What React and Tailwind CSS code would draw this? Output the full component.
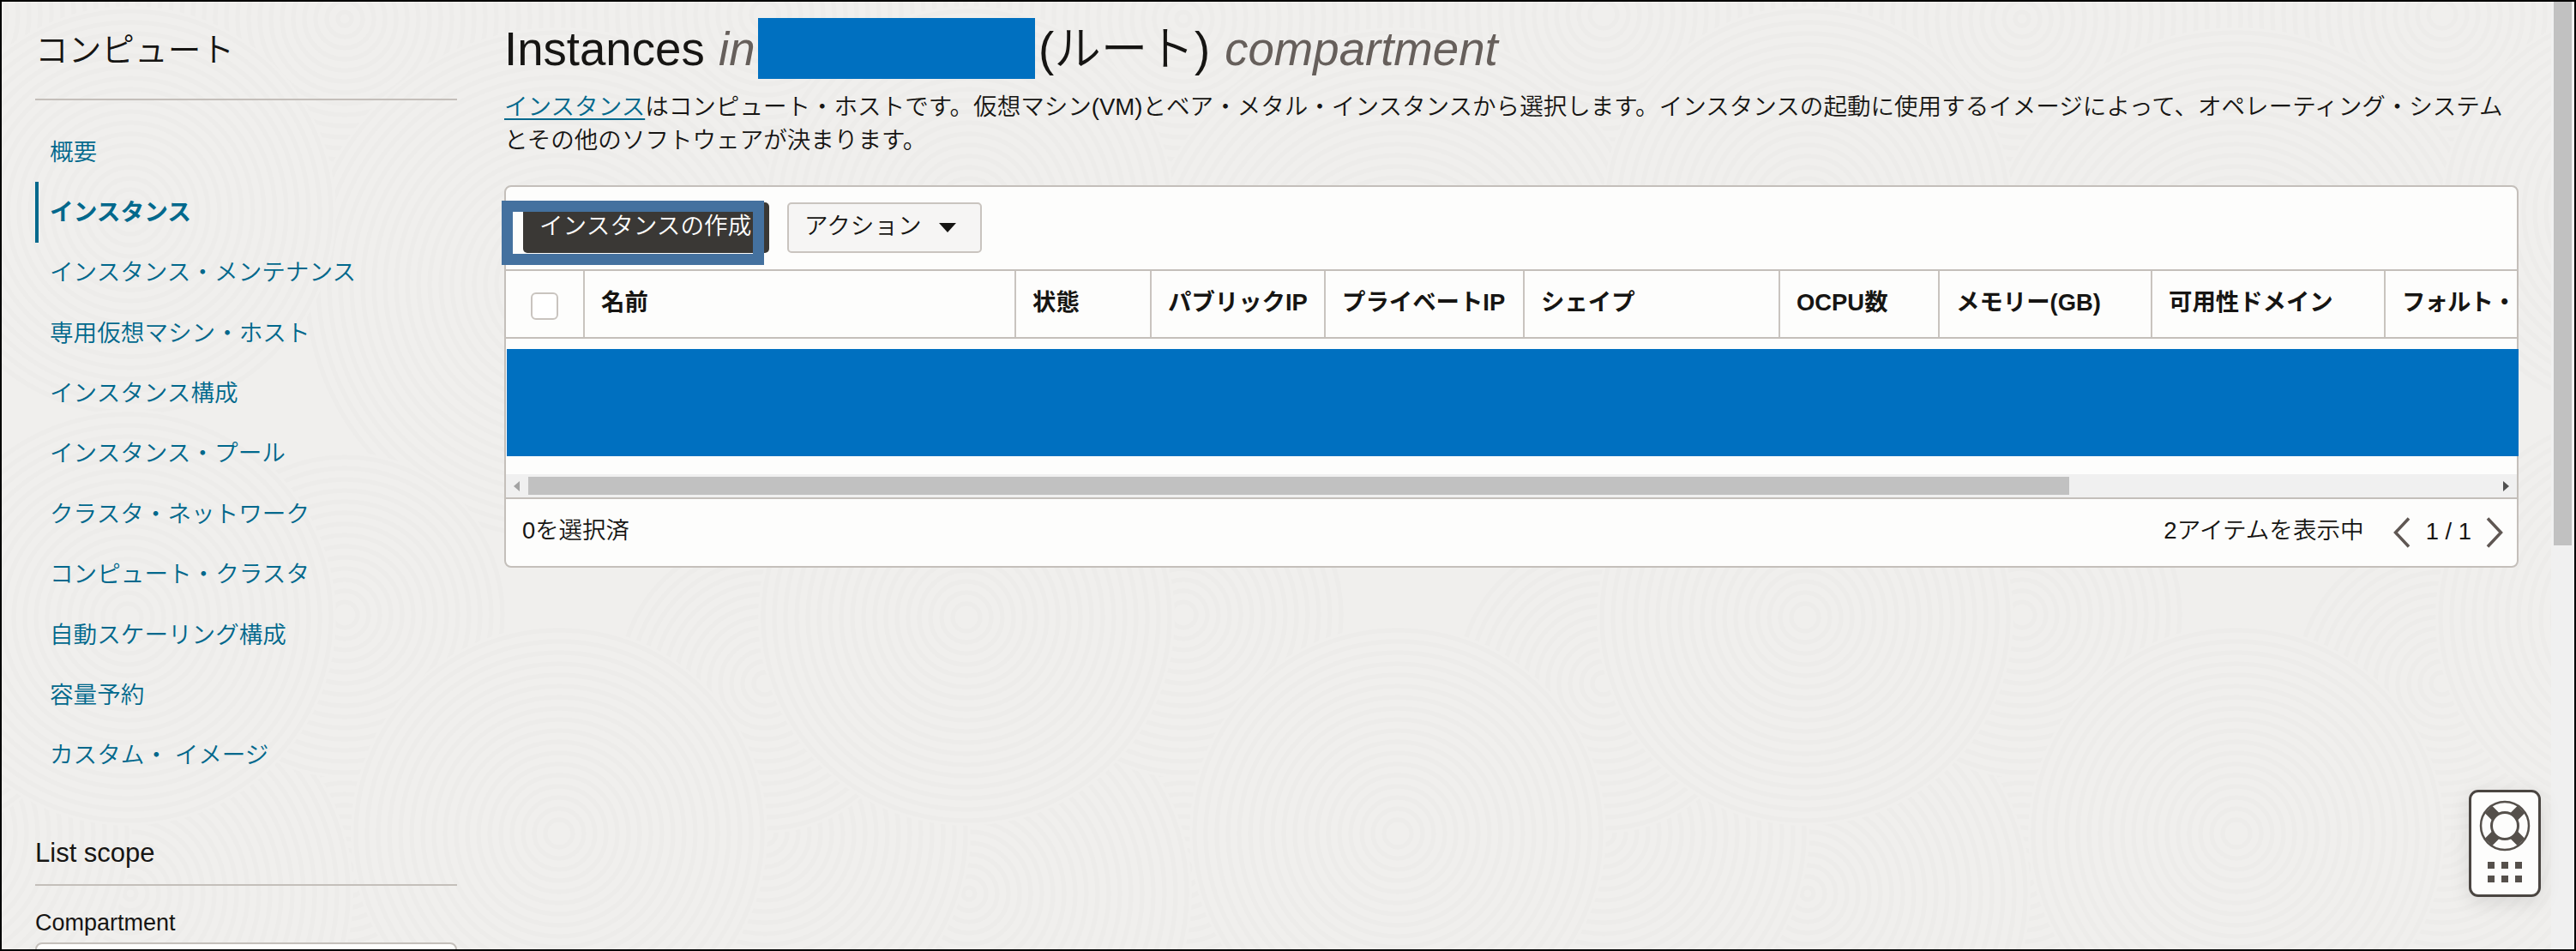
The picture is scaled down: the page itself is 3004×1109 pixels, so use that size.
import { Fragment } from 'react';

const NAV_ITEMS = [
  { label: '概要' },
  { label: 'インスタンス', active: true },
  { label: 'インスタンス・メンテナンス' },
  { label: '専用仮想マシン・ホスト' },
  { label: 'インスタンス構成' },
  { label: 'インスタンス・プール' },
  { label: 'クラスタ・ネットワーク' },
  { label: 'コンピュート・クラスタ' },
  { label: '自動スケーリング構成' },
  { label: '容量予約' },
  { label: 'カスタム・ イメージ' },
];

const COLUMNS = [
  { label: '名前', width: 'w-[503px]' },
  { label: '状態', width: 'w-[158px]' },
  { label: 'パブリックIP', width: 'w-[203px]' },
  { label: 'プライベートIP', width: 'w-[232px]' },
  { label: 'シェイプ', width: 'w-[298px]' },
  { label: 'OCPU数', width: 'w-[186px]' },
  { label: 'メモリー(GB)', width: 'w-[248px]' },
  { label: '可用性ドメイン', width: 'w-[272px]' },
  { label: 'フォルト・', width: 'w-[155px] tracking-[-0.9px]' },
];

// Overlapping ring groups of the background texture, later ones on top
const SWIRLS = [
  { x: 400, y: 20, r: 300 },
  { x: 890, y: 15, r: 230 },
  { x: 650, y: 330, r: 300 },
  { x: 150, y: 245, r: 240 },
  { x: 400, y: 1010, r: 300 },
  { x: 150, y: 1040, r: 260 },
  { x: 890, y: 970, r: 240 },
  { x: 890, y: 795, r: 175 },
  { x: 400, y: 715, r: 190 },
  { x: 147, y: 718, r: 243 },
  { x: 650, y: 970, r: 243 },
];

function Rings({ x, y, r }) {
  const radii = [];
  for (let i = r - 6; i > 4; i -= 13) radii.push(i);
  return (
    <g>
      <circle cx={x} cy={y} r={r} fill="#f0efed" />
      {radii.map((radius) => (
        <circle key={radius} cx={x} cy={y} r={radius} fill="none" stroke="#edecea" strokeWidth="5" />
      ))}
    </g>
  );
}

function Backdrop() {
  return (
    <svg className="absolute inset-0 h-full w-full" aria-hidden="true">
      <defs>
        <pattern id="swirls" width="978" height="1109" patternUnits="userSpaceOnUse">
          <rect width="978" height="1109" fill="#f0efed" />
          {SWIRLS.map((s, i) => (
            <Fragment key={i}>
              <Rings x={s.x - 978} y={s.y} r={s.r} />
              <Rings x={s.x} y={s.y} r={s.r} />
              <Rings x={s.x + 978} y={s.y} r={s.r} />
            </Fragment>
          ))}
        </pattern>
      </defs>
      <rect width="100%" height="100%" fill="url(#swirls)" />
    </svg>
  );
}

function Sidebar() {
  return (
    <aside className="w-[492px] shrink-0">
      <h2 className="flex h-[115px] items-center border-b-2 border-[#c4bfba] pt-px text-[38.7px] font-[350] leading-none whitespace-nowrap">
        コンピュート
      </h2>
      <nav className="mt-[25px] flex flex-col">
        {NAV_ITEMS.map((item) => (
          <a
            key={item.label}
            className={
              item.active
                ? 'flex h-[70.4px] items-center border-l-4 border-[#00688c] pl-[13px] text-[27.7px] font-bold whitespace-nowrap text-[#00688c]'
                : 'flex h-[70.4px] items-center pl-[17px] text-[27.6px] font-[350] whitespace-nowrap text-[#00688c]'
            }
          >
            {item.label}
          </a>
        ))}
      </nav>
      <h3 className="mt-[36px] flex h-[81px] items-center border-b-2 border-[#c4bfba] pt-[5px] text-[31px] leading-none">
        List scope
      </h3>
      <div className="mt-[25px] text-[27px] leading-[36px]">Compartment</div>
      <div className="mt-[5px] h-[60px] rounded-lg border-2 border-[#c4bfba] bg-[#fdfdfc]" />
    </aside>
  );
}

function Toolbar() {
  return (
    <div className="relative flex h-[96px] items-center gap-[21px] pb-[2px] pl-5">
      <button className="h-[59px] w-[287px] rounded-[5px] bg-[#3a3835] pl-[19px] text-left text-[27.6px] font-[350] whitespace-nowrap text-white">
        <span className="relative -top-px">インスタンスの作成</span>
      </button>
      <button className="flex h-[59px] w-[227px] items-center justify-between rounded-[5px] border-2 border-[#c9c4bf] bg-[#f6f5f4] pr-7 pl-[18px] text-[27.6px] font-[350] whitespace-nowrap">
        <span className="relative -top-px">アクション</span>
        <svg width="20" height="11" viewBox="0 0 20 11">
          <path d="M0 0h20l-10 11z" fill="#161513" />
        </svg>
      </button>
      {/* Callout frame round the create button */}
      <div className="absolute top-[16px] -left-[5px] h-[75px] w-[306px] border-[13px] border-[#44719f]" />
    </div>
  );
}

function TableHeader() {
  return (
    <div className="flex h-[81px] overflow-hidden border-y-2 border-[#c4bfba]">
      <div className="flex w-[90px] shrink-0 items-center justify-center pt-1">
        <span className="h-8 w-8 rounded-md border-2 border-[#c9c4bf] bg-white" />
      </div>
      {COLUMNS.map((col) => (
        <div
          key={col.label}
          className={`${col.width} flex shrink-0 items-center border-l-2 border-[#c9c4bf] pb-[3px] pl-[19px] text-[27.4px] font-bold whitespace-nowrap text-[#161513]`}
        >
          {col.label}
        </div>
      ))}
    </div>
  );
}

function HorizontalScrollbar() {
  return (
    <div className="flex h-[27px] items-center bg-[#f0f0f0] px-[9px]">
      <svg width="8" height="12" viewBox="0 0 8 12">
        <path d="M7 0v12L0 6z" fill="#a3a3a3" />
      </svg>
      <div className="ml-[9px] h-[21px] w-[1797px] bg-[#c1c1c1]" />
      <svg className="ml-auto" width="8" height="12" viewBox="0 0 8 12">
        <path d="M1 0v12l7-6z" fill="#505050" />
      </svg>
    </div>
  );
}

function TableFooter() {
  return (
    <div className="flex h-[80px] items-center border-t-2 border-[#c4bfba] pr-4 pl-[19px] text-[27.4px] whitespace-nowrap">
      <span className="mb-[5px] font-[350]">0を選択済</span>
      <span className="mb-[5px] ml-auto text-[27.6px] font-[350]">2アイテムを表示中</span>
      <svg className="ml-[34px]" width="20" height="36" viewBox="0 0 20 36" fill="none" stroke="#5f5753" strokeWidth="3.500">
        <path d="M18 1.500 2.500 18 18 34.500" />
      </svg>
      <span className="mb-[3px] ml-[18px]">1 / 1</span>
      <svg className="ml-[17px]" width="20" height="36" viewBox="0 0 20 36" fill="none" stroke="#5f5753" strokeWidth="3.500">
        <path d="M2 1.500 17.500 18 2 34.500" />
      </svg>
    </div>
  );
}

function HelpWidget() {
  return (
    <div className="absolute top-[921px] left-[2879px] flex h-[125px] w-[84px] flex-col items-center rounded-[11px] border-[3px] border-[#4a4541] bg-[#fdfdfc] pt-[9px] shadow-[0_6px_24px_rgba(0,0,0,0.1)]">
      <svg width="60" height="60" viewBox="0 0 60 60" fill="none" stroke="#55504b">
        <circle cx="30" cy="30" r="28" strokeWidth="2.500" />
        <circle cx="30" cy="30" r="15.500" strokeWidth="3" />
        <path d="M41 19l8-8M41 41l8 8M19 41l-8 8M19 19l-8-8" strokeWidth="12" />
      </svg>
      <div className="mt-[12px] grid grid-cols-3 gap-2">
        {[0, 1, 2, 3, 4, 5].map((i) => (
          <span key={i} className="h-2 w-2 bg-[#55504b]" />
        ))}
      </div>
    </div>
  );
}

export default function App() {
  return (
    <div className="relative h-[1109px] w-[3004px] overflow-hidden border-2 border-black bg-[#f0efed] font-['Liberation_Sans','Noto_Sans_CJK_JP',sans-serif] text-[#161513]">
      <Backdrop />
      <div className="relative flex h-full">
        <div className="flex w-[2973px] shrink-0 pl-[39px]">
          <Sidebar />

          <main className="ml-[55px] w-[2349px] shrink-0">
            <h1 className="flex h-[98px] items-start pt-[19px] text-[54.600px] leading-[73px] whitespace-nowrap">
              <span className="w-[250px]">Instances</span>
              <span className="w-[46px] text-[#665f5b] italic">in</span>
              <span className="h-[71px] w-[323px] bg-[#0070c0]" />
              <span className="ml-[4px] font-[350]">(ルート)</span>
              <span className="ml-[17px] text-[#665f5b] italic">compartment</span>
            </h1>
            <p className="h-[116px] pt-[5px] text-[27.550px] leading-[39px] font-[350] whitespace-nowrap">
              <a className="text-[#00688c] underline underline-offset-4">インスタンス</a>
              はコンピュート・ホストです。仮想マシン(VM)とベア・メタル・インスタンスから選択します。インスタンスの起動に使用するイメージによって、オペレーティング・システム
              <br />
              とその他のソフトウェアが決まります。
            </p>

            <section className="h-[446px] rounded-lg border-2 border-[#c4bfba] bg-[#fdfdfc]">
              <Toolbar />
              <TableHeader />
              <div className="h-[158px] pt-[12px]">
                <div className="relative left-px h-[125px] w-[2346px] bg-[#0070c0]" />
              </div>
              <HorizontalScrollbar />
              <TableFooter />
            </section>
          </main>
        </div>

        {/* Page scrollbar */}
        <div className="flex flex-1 justify-center bg-[#f0f0f0]">
          <div className="h-[634px] w-[21px] bg-[#c1c1c1]" />
        </div>
      </div>
      <div className="absolute -top-[2px] -left-[2px]">
        <HelpWidget />
      </div>
    </div>
  );
}
